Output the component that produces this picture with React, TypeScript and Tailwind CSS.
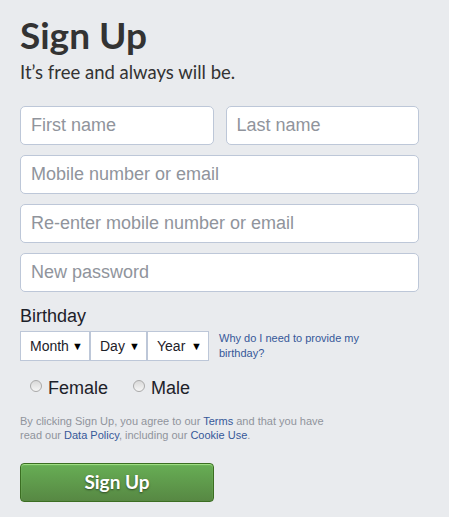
import React from 'react';

const inputCls =
  "h-[39px] w-full rounded-[5px] border border-[#bdc7d8] bg-white px-[10px] text-[18px] text-[#1d2129] placeholder:text-[#90949c] outline-none font-['Liberation_Sans',Arial,sans-serif]";

function Select({ label, width }: { label: string; width: string }) {
  return (
    <div className={`flex h-[30px] items-center justify-between border border-[#bdc7d8] bg-white pl-[9px] pr-[6px] ${width}`}>
      <span className="text-[14px] text-[#1d2129]">{label}</span>
      <span className="text-[11px] text-black">▼</span>
    </div>
  );
}

function Radio({ label }: { label: string }) {
  return (
    <label className="flex items-center gap-[6px]">
      <span className="mt-[-6px] h-[12px] w-[12px] rounded-full border border-[#a9a9a9] bg-gradient-to-b from-[#d9d9d9] to-[#f6f6f6]" />
      <span className="text-[18px] text-[#1d2129]">{label}</span>
    </label>
  );
}

export default function App() {
  return (
    <div className="h-[517px] w-[449px] bg-[#e9ebee] px-[20px] pt-[12px] font-['Liberation_Sans',Arial,sans-serif]">
      {/* heading */}
      <h1 className="font-['Lato',sans-serif] text-[37px] font-bold leading-[46px] text-[#333]">Sign Up</h1>
      <p className="mt-[2px] font-['Lato',sans-serif] text-[18.5px] leading-[24px] text-[#333]">It’s free and always will be.</p>

      {/* fields */}
      <div className="mt-[22px] flex w-[399px] flex-col gap-[10px]">
        <div className="flex gap-[12px]">
          <input className={inputCls} placeholder="First name" />
          <input className={inputCls} placeholder="Last name" />
        </div>
        <input className={inputCls} placeholder="Mobile number or email" />
        <input className={inputCls} placeholder="Re-enter mobile number or email" />
        <input className={inputCls} placeholder="New password" />
      </div>

      {/* birthday */}
      <div className="mt-[13px] text-[18px] leading-[22px] text-[#1d2129]">Birthday</div>
      <div className="mt-[4px] flex items-center">
        <div className="flex">
          <Select label="Month" width="w-[70px]" />
          <Select label="Day" width="w-[57px]" />
          <Select label="Year" width="w-[62px]" />
        </div>
        <a className="ml-[10px] w-[150px] text-[11px] leading-[15px] text-[#365899]">
          Why do I need to provide my birthday?
        </a>
      </div>

      {/* gender */}
      <div className="mt-[14px] flex gap-[25px] pl-[10px]">
        <Radio label="Female" />
        <Radio label="Male" />
      </div>

      {/* terms */}
      <p className="mt-[12px] w-[316px] text-[11px] leading-[14px] text-[#90949c]">
        By clicking Sign Up, you agree to our <a className="text-[#365899]">Terms</a> and that you have read our{' '}
        <a className="text-[#365899]">Data Policy</a>, including our <a className="text-[#365899]">Cookie Use</a>.
      </p>

      <button className="mt-[21px] h-[39px] w-[194px] rounded-[4px] border border-[#3b6e22] bg-gradient-to-b from-[#67ae55] to-[#578843] font-['Lato',sans-serif] text-[19px] font-bold text-white [text-shadow:0_1px_2px_rgba(0,0,0,0.5)] shadow-[inset_0_1px_1px_#a4e388]">
        Sign Up
      </button>
    </div>
  );
}
